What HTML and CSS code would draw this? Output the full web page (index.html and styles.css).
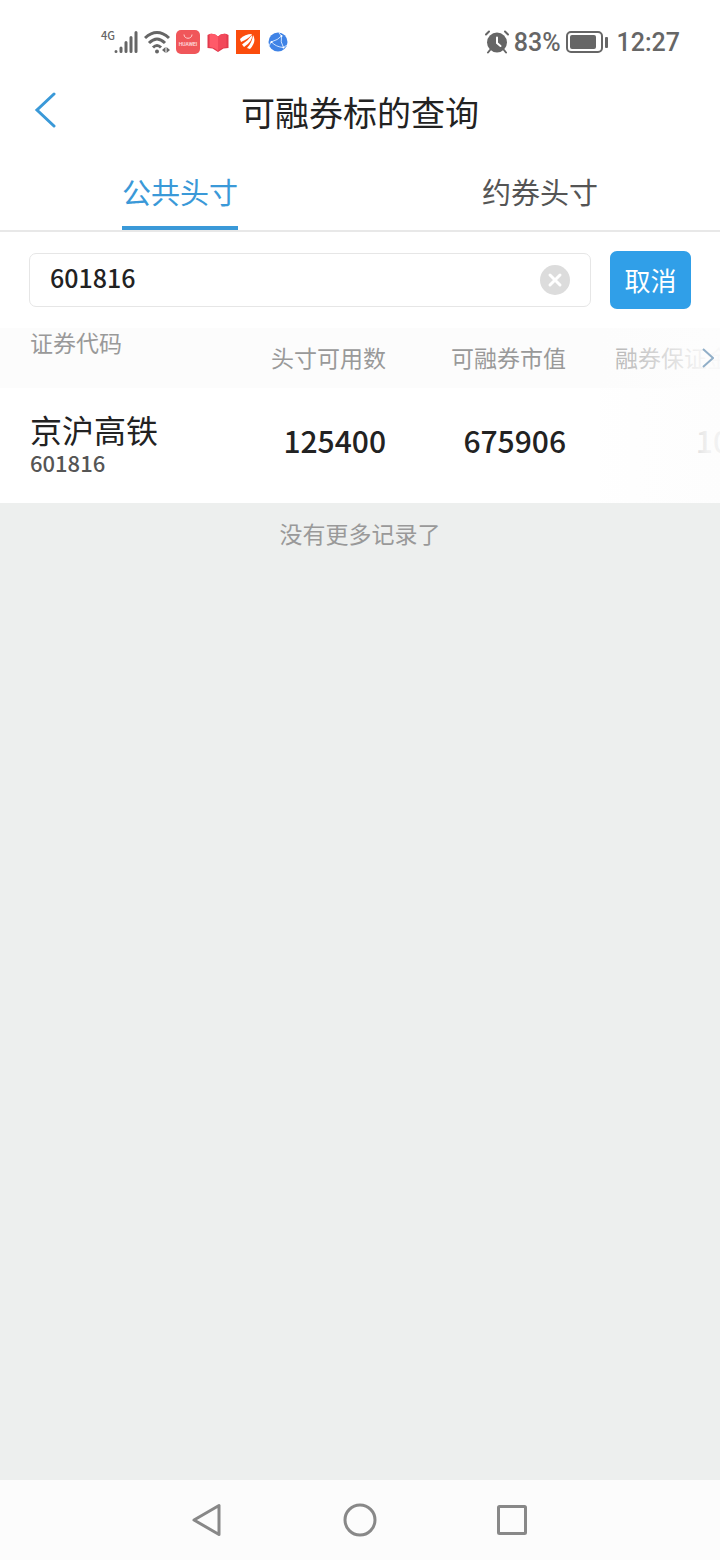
FILE: index.html
```html
<!DOCTYPE html>
<html lang="zh-CN">
  <head>
    <meta charset="UTF-8" />
    <meta name="viewport" content="width=device-width, initial-scale=1.0" />
    <title>可融券标的查询</title>
    <link rel="stylesheet" href="styles.css">
  </head>
  <body>
    <div class="status-bar">
      <div class="status-left">
        <div class="signal">
          <span class="network">4G</span>
          <svg width="24" height="24" viewBox="0 0 24 24" stroke="#666" stroke-width="3" stroke-linecap="round">
            <path d="M2 21.5v0M7 18v3.5M12 12.500v9M17 7.500v14M22 2.500v19" />
          </svg>
        </div>
        <svg width="26" height="24" viewBox="0 0 26 24" fill="none" stroke="#666" stroke-width="3">
          <path d="M1 8Q13 -3 25 8" />
          <path d="M5 13Q13 5 21 13" />
          <path d="M9 17.500Q13 13.500 17 17.500" />
          <circle cx="13" cy="21.500" r="2" fill="#666" stroke="none" />
          <path d="M18 20l3.500-3v6zM26 20l-3.500-3v6z" fill="#666" stroke="none" />
        </svg>
        <svg width="24" height="24" viewBox="0 0 24 24">
          <rect width="24" height="24" rx="5" fill="#f0565a" />
          <path d="M8 4.500c0 5 8 5 8 0" fill="none" stroke="#ffd0d0" stroke-width="1" />
          <text x="12" y="16" class="app-name">HUAWEI</text>
        </svg>
        <svg width="24" height="24" viewBox="0 0 24 24">
          <path d="M1.500 5l2-1Q9 3 12 6.500Q15 3 20.500 4l2 1v13l-5 0.500-5.500 3.500-5.500-3.500-5-0.500z" fill="#e23a4d" />
          <path d="M3.500 4Q9 3 12 6.500V21Q9 17.500 3.500 17z" fill="#ff5a69" />
          <path d="M20.500 4Q15 3 12 6.500V21Q15 17.500 20.500 17z" fill="#f2485a" />
        </svg>
        <svg width="24" height="24" viewBox="0 0 24 24">
          <rect width="24" height="24" fill="#fb4c0c" />
          <path d="M4 9Q9 4 16 4Q14 8 5 12z" fill="#fff" />
          <path d="M6 14.500Q12 11 16 5Q17 11 8 17z" fill="#fff" />
          <path d="M11 18Q16 13 17 5Q21 11 14 19z" fill="#fff" />
        </svg>
        <svg class="globe" width="20" height="20" viewBox="0 0 20 20" fill="none" stroke="#cfe3ff" stroke-width="1">
          <circle cx="10" cy="10" r="9.500" fill="#3f83e6" stroke="none" />
          <path d="M3 10Q10 8 13.500 4M3.500 10Q8 15 15.500 15.500M13.500 4Q12 10 15.500 15.500M3 10L1 14M13.500 4L11 1M15.500 15.500L19 13" />
          <g fill="#fff" stroke="none">
            <circle cx="3.500" cy="10" r="1" />
            <circle cx="13.500" cy="4" r="1" />
            <circle cx="15.500" cy="15.500" r="1" />
          </g>
        </svg>
      </div>
      <div class="status-right">
        <svg width="24" height="24" viewBox="0 0 24 24" fill="none" stroke="#666" stroke-width="2" stroke-linecap="round">
          <circle cx="12" cy="12.500" r="10" fill="#666" stroke="none" />
          <path d="M1 4.500l3-3M23 4.500l-3-3M5 20l-2 2.500M19 20l2 2.500" />
          <path d="M12 7.500v5.500l3.500 3" stroke="#fff" />
        </svg>
        <span>83%</span>
        <svg class="battery" width="42" height="22" viewBox="0 0 42 22">
          <rect x="1" y="1" width="35" height="20" rx="4" fill="none" stroke="#666" stroke-width="2" />
          <rect x="4" y="4" width="26" height="14" rx="2" fill="#666" />
          <rect x="39" y="6" width="3" height="11" rx="1" fill="#666" />
        </svg>
        <span>12:27</span>
      </div>
    </div>

    <header class="header">
      <button type="button" class="back" aria-label="返回">
        <svg width="22" height="36" viewBox="0 0 22 36" fill="none" stroke="#3a99d8" stroke-width="3" stroke-linecap="round">
          <path d="M20 2L3 18L20 34" />
        </svg>
      </button>
      <h1>可融券标的查询</h1>
    </header>

    <nav class="tabs">
      <button type="button" class="tab active"><span>公共头寸</span></button>
      <button type="button" class="tab"><span>约券头寸</span></button>
    </nav>

    <form class="search">
      <div class="search-box">
        <input type="text" id="code" name="code" value="601816" aria-label="证券代码" />
        <button type="reset" class="clear" aria-label="清除">
          <svg width="30" height="30" viewBox="0 0 30 30">
            <circle cx="15" cy="15" r="15" fill="#dcdcdc" />
            <path d="M10 10l10 10M20 10l-10 10" stroke="#fff" stroke-width="3" stroke-linecap="round" />
          </svg>
        </button>
      </div>
      <button type="button" class="cancel">取消</button>
    </form>

    <div class="list">
      <table>
        <colgroup>
          <col class="col-name" />
          <col class="col-value" />
          <col class="col-value" />
          <col class="col-last" />
        </colgroup>
        <thead>
          <tr>
            <th>证券代码</th>
            <th>头寸可用数</th>
            <th>可融券市值</th>
            <th>融券保证金</th>
          </tr>
        </thead>
        <tbody>
          <tr>
            <td>
              <div class="stock-name">京沪高铁</div>
              <div class="stock-code">601816</div>
            </td>
            <td>125400</td>
            <td>675906</td>
            <td>10</td>
          </tr>
        </tbody>
      </table>
      <!-- fades out the columns that continue to the right -->
      <div class="fade">
        <svg width="12" height="20" viewBox="0 0 12 20" fill="none" stroke="#91afc8" stroke-width="2">
          <path d="M1 1l10 9-10 9" />
        </svg>
      </div>
    </div>

    <main class="empty">没有更多记录了</main>

    <div class="nav-bar">
      <button type="button" aria-label="后退">
        <svg width="34" height="34" viewBox="0 0 34 34">
          <path d="M3 17L28 2.500V31.500z" />
        </svg>
      </button>
      <button type="button" aria-label="主页">
        <svg width="34" height="34" viewBox="0 0 34 34">
          <circle cx="17" cy="17" r="15" />
        </svg>
      </button>
      <button type="button" aria-label="最近任务">
        <svg width="34" height="34" viewBox="0 0 34 34">
          <rect x="3.500" y="3.500" width="27" height="27" rx="1" />
        </svg>
      </button>
    </div>
  </body>
</html>
```
FILE: styles.css
```css
* {
  box-sizing: border-box;
}

body {
  margin: 0;
  min-height: 100vh;
  display: flex;
  flex-direction: column;
  background-color: #fff;
  color: #222;
  font-family: "Noto Sans CJK SC", sans-serif;
}

button {
  padding: 0;
  border: none;
  background: none;
  font-family: inherit;
  cursor: pointer;
}

svg {
  display: block;
  flex-shrink: 0;
}

.status-bar {
  display: flex;
  justify-content: space-between;
  align-items: center;
  height: 84px;
  padding: 0 40px 0 101px;
  color: #666;
  font-family: Roboto, sans-serif;
  font-size: 25px;
  font-weight: 500;
}

.status-left,
.status-right {
  display: flex;
  align-items: center;
}

.status-left {
  gap: 6px;
}

.status-right {
  gap: 5px;
}

.signal {
  display: flex;
  align-items: flex-start;
}

.network {
  width: 13px;
  font-family: "Noto Sans CJK SC", sans-serif;
  font-size: 11px;
  line-height: 10px;
}

.app-name {
  fill: #ffe0e0;
  font-size: 5px;
  text-anchor: middle;
}

.globe {
  margin-left: 2px;
}

.battery {
  margin-right: 4px;
}

.header {
  display: flex;
  align-items: center;
  justify-content: center;
  position: relative;
  height: 56px;
}

.header h1 {
  margin: 0;
  font-size: 34px;
  font-weight: 400;
  line-height: 56px;
}

.back {
  position: absolute;
  left: 34px;
  top: 8px;
}

.tabs {
  display: flex;
  border-bottom: 2px solid #e8e8e8;
}

.tab {
  flex: 1;
  display: flex;
  justify-content: center;
  padding-top: 16px;
  color: #555;
  font-size: 29px;
  line-height: 70px;
}

.tab span {
  border-bottom: 4px solid transparent;
}

.tab.active {
  color: #3a99d8;
}

.tab.active span {
  border-color: #3a99d8;
}

.search {
  display: flex;
  align-items: center;
  gap: 19px;
  height: 96px;
  padding: 0 29px;
}

.search-box {
  flex: 1;
  display: flex;
  align-items: center;
  height: 54px;
  padding: 0 20px;
  border: 1px solid #e6e6e6;
  border-radius: 7px;
}

.search-box input {
  flex: 1;
  min-width: 0;
  height: 50px;
  padding: 0 0 6px;
  border: none;
  outline: none;
  color: #222;
  font-family: inherit;
  font-size: 25px;
  font-weight: 500;
}

.cancel {
  width: 81px;
  height: 58px;
  padding-bottom: 2px;
  border-radius: 7px;
  background-color: #309fe8;
  color: #fff;
  font-size: 26px;
}

.list {
  position: relative;
  overflow: hidden;
}

table {
  width: 730px;
  table-layout: fixed;
  border-collapse: collapse;
}

.col-name {
  width: 206px;
}

.col-value {
  width: 180px;
}

.col-last {
  width: 164px;
}

thead {
  background-color: #fcfcfc;
}

th,
td {
  padding: 0;
  text-align: right;
  white-space: nowrap;
}

th {
  height: 60px;
  padding-bottom: 2px;
  color: #999;
  font-size: 23px;
  font-weight: 400;
  line-height: 28px;
}

td {
  height: 115px;
  padding-bottom: 12px;
  font-size: 30px;
  font-weight: 500;
  line-height: 40px;
}

th:first-child,
td:first-child {
  padding-left: 30px;
  text-align: left;
}

th:first-child {
  vertical-align: top;
}

td:first-child {
  padding-bottom: 4px;
}

.stock-name {
  font-size: 32px;
  font-weight: 400;
  line-height: 36px;
}

.stock-code {
  color: #555;
  font-size: 22px;
  line-height: 30px;
}

.fade {
  position: absolute;
  top: 0;
  right: 0;
  bottom: 0;
  width: 120px;
  padding: 20px 6px 0 0;
  display: flex;
  justify-content: flex-end;
  background: linear-gradient(to right, rgba(252, 252, 252, 0.2), rgba(253, 253, 253, 0.95) 90%);
}

.empty {
  flex: 1;
  padding-top: 15px;
  background-color: #edefee;
  color: #999;
  font-size: 23px;
  line-height: 30px;
  text-align: center;
}

.nav-bar {
  display: flex;
  align-items: center;
  justify-content: center;
  gap: 118px;
  height: 80px;
  background-color: #fcfcfc;
}

.nav-bar svg {
  fill: none;
  stroke: #888;
  stroke-width: 3;
  stroke-linejoin: round;
}
```
